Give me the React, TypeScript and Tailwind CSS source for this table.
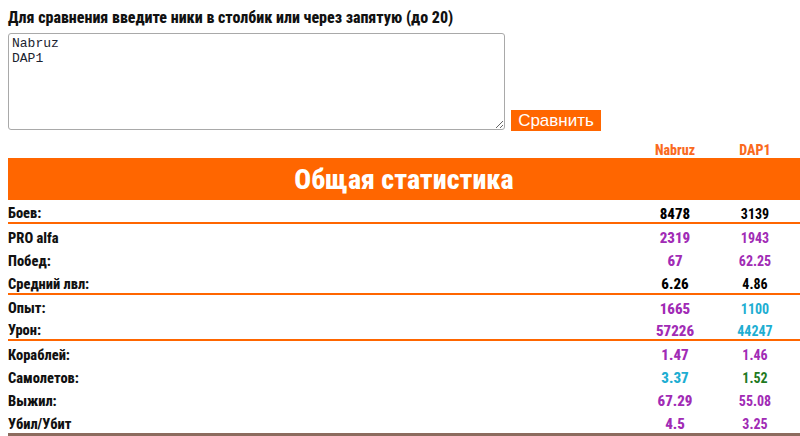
import { useState } from "react";

// Roboto at 75% width stands in for the site's narrow bold face
const NARROW = "font-['Roboto',sans-serif] [font-stretch:75%]";

type Val = { v: string; c: string };
type Row = { label: string; a: Val; b: Val };

const BLACK = "text-black";
const PURPLE = "text-[#a12bb5]";
const CYAN = "text-[#1eaed2]";
const GREEN = "text-[#1f7a1f]";

const GROUPS: { rows: Row[]; h: string }[] = [
  {
    h: "h-[22px]",
    rows: [{ label: "Боев:", a: { v: "8478", c: BLACK }, b: { v: "3139", c: BLACK } }],
  },
  {
    h: "h-[23px]",
    rows: [
      { label: "PRO alfa", a: { v: "2319", c: PURPLE }, b: { v: "1943", c: PURPLE } },
      { label: "Побед:", a: { v: "67", c: PURPLE }, b: { v: "62.25", c: PURPLE } },
      { label: "Средний лвл:", a: { v: "6.26", c: BLACK }, b: { v: "4.86", c: BLACK } },
    ],
  },
  {
    h: "h-[22px]",
    rows: [
      { label: "Опыт:", a: { v: "1665", c: PURPLE }, b: { v: "1100", c: CYAN } },
      { label: "Урон:", a: { v: "57226", c: PURPLE }, b: { v: "44247", c: CYAN } },
    ],
  },
  {
    h: "h-[23px]",
    rows: [
      { label: "Кораблей:", a: { v: "1.47", c: PURPLE }, b: { v: "1.46", c: PURPLE } },
      { label: "Самолетов:", a: { v: "3.37", c: CYAN }, b: { v: "1.52", c: GREEN } },
      { label: "Выжил:", a: { v: "67.29", c: PURPLE }, b: { v: "55.08", c: PURPLE } },
      { label: "Убил/Убит", a: { v: "4.5", c: PURPLE }, b: { v: "3.25", c: PURPLE } },
    ],
  },
];

export default function App() {
  const [nicks, setNicks] = useState("Nabruz\nDAP1");

  return (
    <div className={`w-[800px] h-[436px] overflow-hidden bg-white pl-2 ${NARROW}`}>
      {/* ── Form ── */}
      <div className="pt-[9px] text-[16px] font-extrabold leading-[17px] text-[#111]">
        Для сравнения введите ники в столбик или через запятую (до 20)
      </div>
      <div className="flex items-end gap-[6px] mt-[7px]">
        <textarea
          value={nicks}
          onChange={(e) => setNicks(e.target.value)}
          className="w-[497px] h-[97px] border border-[#a9a9a9] rounded-[3px] px-[3px] py-[2px] font-['Liberation_Mono',monospace] [font-stretch:100%] text-[13px] leading-[15px] text-[#1b2330] outline-none"
        />
        <button className="w-[90px] h-[21px] mb-[-1px] bg-[#ff6600] text-white font-['Liberation_Sans',Arial,sans-serif] [font-stretch:100%] text-[17px] leading-[21px]">
          Сравнить
        </button>
      </div>

      {/* ── Column heads ── */}
      <div className="flex h-[28px] items-end pr-[5px] text-[14px] leading-[16px] font-extrabold text-[#fa6a1e]">
        <div className="flex-1" />
        <div className="w-[80px] text-center">Nabruz</div>
        <div className="w-[80px] text-center">DAP1</div>
      </div>

      {/* ── Banner ── */}
      <div className="h-[42px] bg-[#ff6600] flex items-center justify-center pt-[2px] text-white text-[28px] font-extrabold">
        Общая статистика
      </div>

      {/* ── Stats ── */}
      {GROUPS.map((g, gi) => (
        <div
          key={gi}
          className={gi < GROUPS.length - 1 ? "border-b-2 border-[#ff6600]" : "border-b-[4px] border-[#8c6b5e]"}
        >
          {g.rows.map((r) => (
            <div key={r.label} className={`flex items-center pt-[6px] pr-[5px] ${g.h}`}>
              <div className="flex-1 text-[14.5px] font-extrabold text-[#111]">{r.label}</div>
              <div className={`w-[80px] text-center text-[15px] font-extrabold ${r.a.c}`}>{r.a.v}</div>
              <div className={`w-[80px] text-center text-[14px] font-bold ${r.b.c}`}>{r.b.v}</div>
            </div>
          ))}
        </div>
      ))}
    </div>
  );
}
